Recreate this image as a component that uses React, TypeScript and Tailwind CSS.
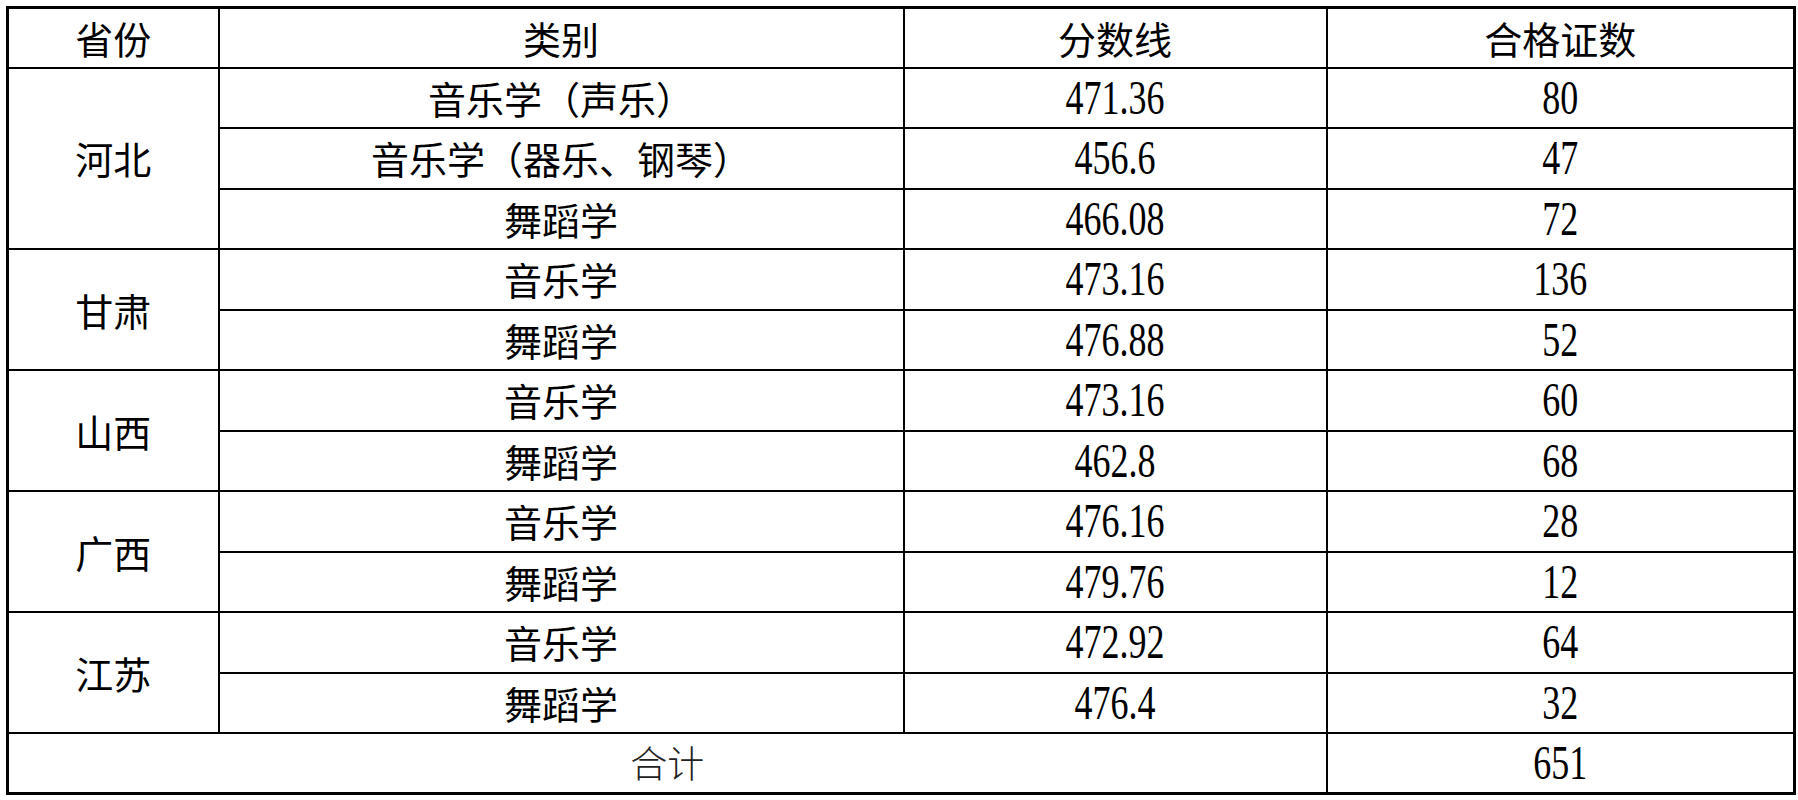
const rows = [
  { province: '河北', items: [
    { type: '音乐学（声乐）', score: '471.36', count: '80' },
    { type: '音乐学（器乐、钢琴）', score: '456.6', count: '47' },
    { type: '舞蹈学', score: '466.08', count: '72' },
  ] },
  { province: '甘肃', items: [
    { type: '音乐学', score: '473.16', count: '136' },
    { type: '舞蹈学', score: '476.88', count: '52' },
  ] },
  { province: '山西', items: [
    { type: '音乐学', score: '473.16', count: '60' },
    { type: '舞蹈学', score: '462.8', count: '68' },
  ] },
  { province: '广西', items: [
    { type: '音乐学', score: '476.16', count: '28' },
    { type: '舞蹈学', score: '479.76', count: '12' },
  ] },
  { province: '江苏', items: [
    { type: '音乐学', score: '472.92', count: '64' },
    { type: '舞蹈学', score: '476.4', count: '32' },
  ] },
];

const cn = "font-['Noto_Sans_CJK_SC',sans-serif] text-[38px] leading-none";
const num = "font-['Liberation_Serif',serif] text-[36px]";
const cell = 'border-2 border-black text-center align-middle p-0';

function Num({ children }: { children: string }) {
  return <span className="inline-block scale-y-[1.35] leading-none">{children}</span>;
}

export default function App() {
  return (
    <div className="w-[1798px] h-[800px] bg-white pl-[6px] pt-[6px]">
      <table className="border-collapse border-[3px] border-black table-fixed w-[1787px] text-black">
        <colgroup>
          <col className="w-[211px]" />
          <col className="w-[685px]" />
          <col className="w-[423px]" />
          <col className="w-[468px]" />
        </colgroup>
        <tbody>
          <tr className="h-[60px]">
            <td className={`${cell} ${cn}`}>省份</td>
            <td className={`${cell} ${cn}`}>类别</td>
            <td className={`${cell} ${cn}`}>分数线</td>
            <td className={`${cell} ${cn}`}>合格证数</td>
          </tr>
          {rows.map((g) =>
            g.items.map((it, i) => (
              <tr key={g.province + i} className="h-[60.5px]">
                {i === 0 && (
                  <td rowSpan={g.items.length} className={`${cell} ${cn}`}>
                    {g.province}
                  </td>
                )}
                <td className={`${cell} ${cn}`}>{it.type}</td>
                <td className={`${cell} ${num}`}><Num>{it.score}</Num></td>
                <td className={`${cell} ${num}`}><Num>{it.count}</Num></td>
              </tr>
            )),
          )}
          <tr className="h-[60px]">
            <td colSpan={3} className={`${cell} font-['Noto_Sans_CJK_SC',sans-serif] text-[37px] leading-none font-light text-[#222]`}>合计</td>
            <td className={`${cell} ${num}`}><Num>651</Num></td>
          </tr>
        </tbody>
      </table>
    </div>
  );
}
